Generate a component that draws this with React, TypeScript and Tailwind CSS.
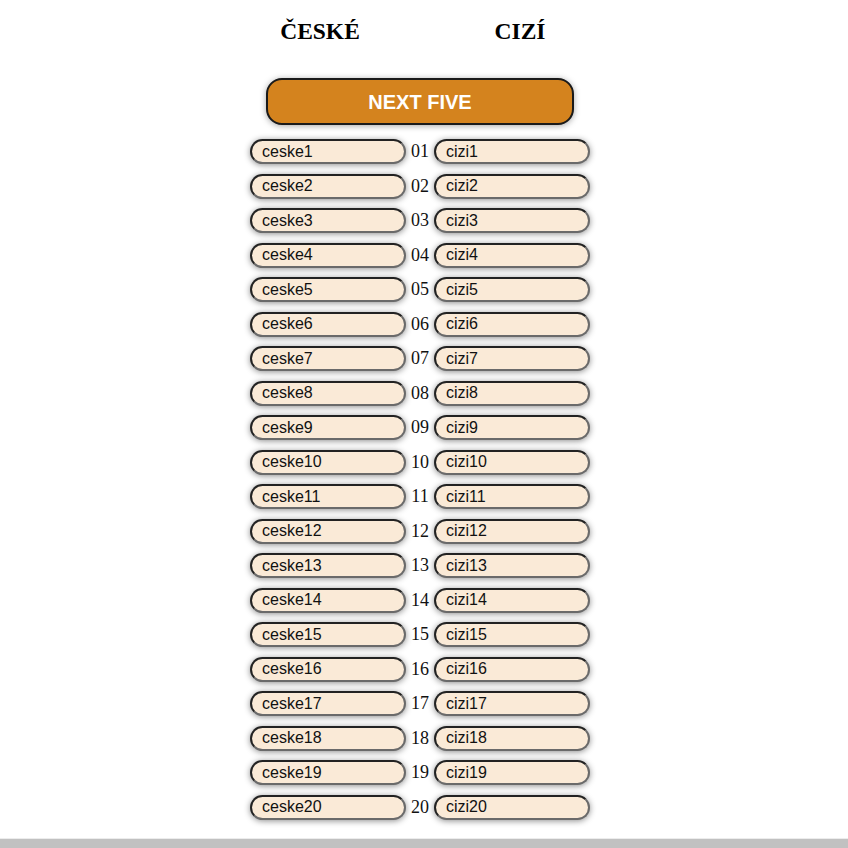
import React from "react";

const rows = Array.from({ length: 20 }, (_, i) => i + 1);

export default function App() {
  return (
    <div className="w-[848px] min-h-[848px] bg-white flex flex-col">
      <div className="w-[840px] flex flex-col items-center">
        <div className="flex mt-[18px] h-[28px] items-center font-['Liberation_Serif',serif] font-bold text-[23.5px] text-black">
          <div className="w-[200px] text-center">ČESKÉ</div>
          <div className="w-[200px] text-center">CIZÍ</div>
        </div>
        <button className="mt-[32px] w-[308px] h-[47px] rounded-[16px] bg-[#d4831e] border-2 border-[#1a1a1a] text-white font-bold text-[20px] font-['Liberation_Sans',Arial,sans-serif] shadow-[0_1px_6px_rgba(0,0,0,0.35)]">
          NEXT FIVE
        </button>
        <div className="mt-[14px] flex flex-col">
          {rows.map((n) => (
            <div key={n} className="h-[34.53px] flex items-start">
              <div className="w-[156px] h-[25px] rounded-full bg-[#faead7] border-2 border-t-[#222] border-l-[#222] border-r-[#6a6a6a] border-b-[#6a6a6a] shadow-[0_1px_6px_rgba(0,0,0,0.45)] pl-[10px] flex items-center text-[16px] text-[#111] font-['Liberation_Sans',Arial,sans-serif]">
                ceske{n}
              </div>
              <div className="w-[28px] text-center text-[18px] leading-[22px] pt-[1px] text-[#111] font-['Liberation_Serif',serif]">
                {String(n).padStart(2, "0")}
              </div>
              <div className="w-[156px] h-[25px] rounded-full bg-[#faead7] border-2 border-t-[#222] border-l-[#222] border-r-[#6a6a6a] border-b-[#6a6a6a] shadow-[0_1px_6px_rgba(0,0,0,0.45)] pl-[10px] flex items-center text-[16px] text-[#111] font-['Liberation_Sans',Arial,sans-serif]">
                cizi{n}
              </div>
            </div>
          ))}
        </div>
      </div>
      <div className="mt-auto h-[1px] bg-[#ececec]" />
      <div className="h-[9px] bg-[#c1c1c1]" />
    </div>
  );
}
